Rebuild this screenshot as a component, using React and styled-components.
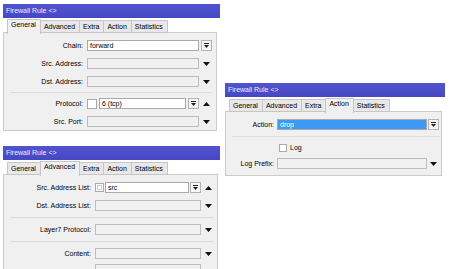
import styled, { createGlobalStyle } from 'styled-components';

const GlobalStyle = createGlobalStyle`
	html, body {
		margin: 0;
		padding: 0;
		background: #fff;
	}
	body {
		font-family: 'Liberation Sans', Arial, sans-serif;
		font-size: 7px;
		color: #000;
	}
`;

const Desktop = styled.div`
	position: relative;
	width: 450px;
	height: 269px;
	overflow: hidden;
	background: #fff;
`;

const Window = styled.div`
	position: absolute;
	left: ${(p) => p.$left}px;
	top: ${(p) => p.$top}px;
	width: ${(p) => p.$width}px;
`;

const TitleBar = styled.div`
	height: 14px;
	padding-left: 3px;
	box-sizing: border-box;
	background: linear-gradient(#5253cf, #4647c2);
	color: #eef;
	line-height: 14px;
	white-space: nowrap;
`;

const TabStrip = styled.div`
	display: flex;
	align-items: flex-end;
	height: 15px;
	padding-left: 4px;
	box-sizing: border-box;
	position: relative;
	z-index: 1;
`;

const Tab = styled.div`
	height: ${(p) => (p.$active ? 15 : 13)}px;
	padding: 0 4px 0 3px;
	box-sizing: border-box;
	border: 1px solid #c6c6c6;
	border-bottom: ${(p) => (p.$active ? 'none' : '1px solid #c6c6c6')};
	margin-left: -1px;
	background: ${(p) => (p.$active ? '#f0f0f0' : '#e8e8e8')};
	line-height: ${(p) => (p.$active ? 10 : 11)}px;
	white-space: nowrap;
	margin-bottom: ${(p) => (p.$active ? -1 : 0)}px;
	&:first-child {
		margin-left: 0;
	}
`;

const BodyWrap = styled.div`
	width: ${(p) => p.$width}px;
`;

const Body = styled.div`
	background: #f0f0f0;
	border: 1px solid #cbcbcb;
	border-bottom-color: ${(p) => (p.$open ? 'transparent' : '#cbcbcb')};
	height: ${(p) => p.$height}px;
	box-sizing: border-box;
	padding-top: 7px;
	margin-top: -1px;
	display: flex;
	flex-direction: column;
	gap: 7px;
	overflow: hidden;
`;

const Row = styled.div`
	display: grid;
	grid-template-columns: ${(p) => p.$cols};
	column-gap: ${(p) => p.$gap ?? 2}px;
	align-items: center;
	height: 11px;
	flex-shrink: 0;
	margin-top: ${(p) => p.$mt ?? 0}px;
`;

const Label = styled.div`
	text-align: right;
	padding-right: 2px;
	white-space: nowrap;
`;

const Field = styled.div`
	display: flex;
	align-items: center;
	gap: ${(p) => p.$gap ?? 2}px;
	height: 11px;
`;

const Input = styled.div`
	flex: 1;
	height: 11px;
	box-sizing: border-box;
	border: 1px solid ${(p) => (p.$empty ? '#bcbcbc' : '#a9a9a9')};
	background: ${(p) => (p.$selected ? '#3a9af5' : p.$empty ? '#f0f0f0' : '#fff')};
	color: ${(p) => (p.$selected ? '#fff' : '#000')};
	padding-left: 2px;
	line-height: 9px;
	white-space: nowrap;
	overflow: hidden;
`;

const Button = styled.div`
	width: 11px;
	height: 11px;
	box-sizing: border-box;
	border: 1px solid #b4b4b4;
	background: #f6f6f6;
	display: flex;
	align-items: center;
	justify-content: center;
`;

const Trail = styled.div`
	display: flex;
	align-items: center;
	justify-content: center;
	height: 11px;
`;

const Box = styled.div`
	width: ${(p) => p.$size}px;
	height: ${(p) => p.$size}px;
	box-sizing: border-box;
	border: 1px solid #a9a9a9;
	background: #fff;
	flex-shrink: 0;
	display: flex;
	align-items: center;
	justify-content: center;
`;

const Separator = styled.div`
	height: 1px;
	background: #dcdcdc;
	margin: ${(p) => p.$m - 7}px ${(p) => p.$right}px ${(p) => p.$m - 7}px ${(p) => p.$left}px;
	flex-shrink: 0;
`;

const CheckRow = styled.div`
	display: flex;
	align-items: center;
	gap: 3px;
	height: 9px;
	flex-shrink: 0;
	padding-left: ${(p) => p.$indent}px;
`;

const DropIcon = () => (
	<svg width="7" height="7" viewBox="0 0 7 7">
		<rect x="1" y="1" width="5" height="1" fill="#222" />
		<polygon points="1,3 6,3 3.5,6" fill="#222" />
	</svg>
);

const Arrow = ({ up }) => (
	<svg width="7" height="4" viewBox="0 0 7 4">
		<polygon points={up ? '0,4 7,4 3.5,0' : '0,0 7,0 3.5,4'} fill="#111" />
	</svg>
);

const NegIcon = () => (
	<svg width="5" height="5" viewBox="0 0 5 5">
		<rect x="0.5" y="0.5" width="4" height="4" fill="none" stroke="#999" strokeDasharray="1 1" />
	</svg>
);

const tabNames = ['General', 'Advanced', 'Extra', 'Action', 'Statistics'];

const Tabs = ({ active }) => (
	<TabStrip>
		{tabNames.map((name) => (
			<Tab key={name} $active={name === active}>
				{name}
			</Tab>
		))}
	</TabStrip>
);

const Frame = ({ left, top, width, bodyWidth, active, height, open, children }) => (
	<Window $left={left} $top={top} $width={width}>
		<TitleBar>Firewall Rule &lt;&gt;</TitleBar>
		<Tabs active={active} />
		<BodyWrap $width={bodyWidth}>
			<Body $height={height} $open={open}>
				{children}
			</Body>
		</BodyWrap>
	</Window>
);

const cols1 = '81px 112px 11px';
const cols2 = '89px 106px 11px';
const cols3 = '50px 150px 11px';

export default function App() {
	return (
		<>
			<GlobalStyle />
			<Desktop>
				<Frame left={3} top={4} width={217} bodyWidth={214} active="General" height={99}>
					<Row $cols={cols1}>
						<Label>Chain:</Label>
						<Input>forward</Input>
						<Button>
							<DropIcon />
						</Button>
					</Row>
					<Row $cols={cols1}>
						<Label>Src. Address:</Label>
						<Input $empty />
						<Trail>
							<Arrow />
						</Trail>
					</Row>
					<Row $cols={cols1}>
						<Label>Dst. Address:</Label>
						<Input $empty />
						<Trail>
							<Arrow />
						</Trail>
					</Row>
					<Separator $m={5} $left={6} $right={4} />
					<Row $cols={cols1}>
						<Label>Protocol:</Label>
						<Field>
							<Box $size={10} />
							<Input>6 (tcp)</Input>
							<Button>
								<DropIcon />
							</Button>
						</Field>
						<Trail>
							<Arrow up />
						</Trail>
					</Row>
					<Row $cols={cols1}>
						<Label>Src. Port:</Label>
						<Input $empty />
						<Trail>
							<Arrow />
						</Trail>
					</Row>
				</Frame>

				<Frame left={3} top={146} width={217} bodyWidth={215} active="Advanced" height={100} open>
					<Row $cols={cols2}>
						<Label>Src. Address List:</Label>
						<Field $gap={1}>
							<Box $size={9}>
								<NegIcon />
							</Box>
							<Input>src</Input>
							<Button>
								<DropIcon />
							</Button>
						</Field>
						<Trail>
							<Arrow up />
						</Trail>
					</Row>
					<Row $cols={cols2}>
						<Label>Dst. Address List:</Label>
						<Input $empty />
						<Trail>
							<Arrow />
						</Trail>
					</Row>
					<Separator $m={6} $left={6} $right={4} />
					<Row $cols={cols2}>
						<Label>Layer7 Protocol:</Label>
						<Input $empty />
						<Trail>
							<Arrow />
						</Trail>
					</Row>
					<Separator $m={6} $left={6} $right={4} />
					<Row $cols={cols2}>
						<Label>Content:</Label>
						<Input $empty />
						<Trail>
							<Arrow />
						</Trail>
					</Row>
					<Row $cols={cols2} $mt={-2}>
						<span />
						<Input $empty />
					</Row>
				</Frame>

				<Frame left={225} top={83} width={220} bodyWidth={217} active="Action" height={65}>
					<Row $cols={cols3} $gap={1}>
						<Label>Action:</Label>
						<Input $selected>drop</Input>
						<Button>
							<DropIcon />
						</Button>
					</Row>
					<Separator $m={6} $left={6} $right={1} />
					<CheckRow $indent={53}>
						<Box $size={8} />
						<span>Log</span>
					</CheckRow>
					<Row $cols={cols3} $gap={1} $mt={-1}>
						<Label>Log Prefix:</Label>
						<Input $empty />
						<Trail>
							<Arrow />
						</Trail>
					</Row>
				</Frame>
			</Desktop>
		</>
	);
}
